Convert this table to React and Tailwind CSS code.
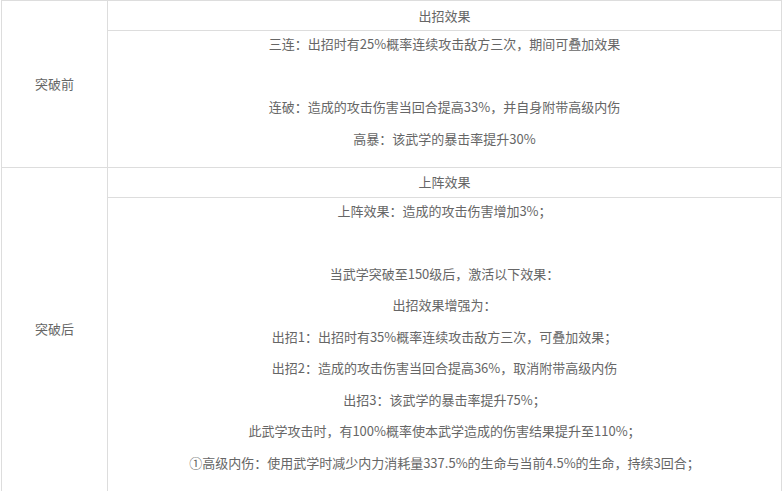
import React from "react";

const before = [
  "三连：出招时有25%概率连续攻击敌方三次，期间可叠加效果",
  "",
  "连破：造成的攻击伤害当回合提高33%，并自身附带高级内伤",
  "高暴：该武学的暴击率提升30%",
];

const after = [
  "上阵效果：造成的攻击伤害增加3%；",
  "",
  "当武学突破至150级后，激活以下效果：",
  "出招效果增强为：",
  "出招1：出招时有35%概率连续攻击敌方三次，可叠加效果；",
  "出招2：造成的攻击伤害当回合提高36%，取消附带高级内伤",
  "出招3：该武学的暴击率提升75%；",
  "此武学攻击时，有100%概率使本武学造成的伤害结果提升至110%；",
  "①高级内伤：使用武学时减少内力消耗量337.5%的生命与当前4.5%的生命，持续3回合；",
];

const Section = ({ label, title, lines }) => (
  <div className="flex border-b border-[#ddd]">
    <div className="w-[106px] shrink-0 border-r border-[#ddd] flex items-center justify-center">
      {label}
    </div>
    <div className="flex-1">
      <div className="h-[30px] border-b border-[#ddd] flex items-center justify-center">
        {title}
      </div>
      <div className="flex flex-col gap-[9.5px] pt-[2px] pb-[17px] text-center">
        {lines.map((line, i) => (
          <p key={i} className="leading-[22px]">
            {line || "\u00a0"}
          </p>
        ))}
      </div>
    </div>
  </div>
);

export default function App() {
  return (
    <div className="bg-white min-h-screen">
      <div className="ml-px w-[781px] border-t border-x border-[#ddd] text-[13px] text-[#666] font-['Noto_Sans_CJK_SC','Microsoft_YaHei',sans-serif]">
        <Section label="突破前" title="出招效果" lines={before} />
        <Section label="突破后" title="上阵效果" lines={after} />
      </div>
    </div>
  );
}
